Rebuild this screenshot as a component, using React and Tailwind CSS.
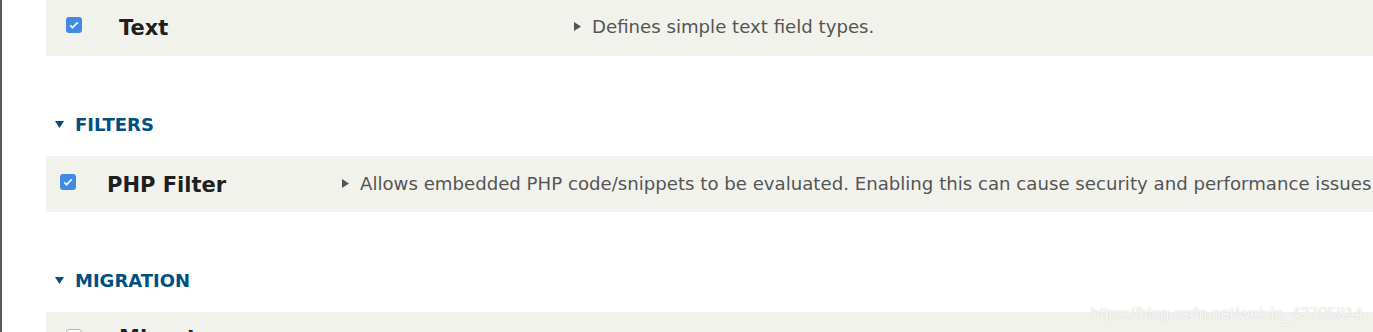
import React from "react";

const font = { fontFamily: '"DejaVu Sans", Verdana, sans-serif' };

function Check({ checked }) {
  if (!checked) {
    return <span className="block h-4 w-4 rounded-[3px] border border-[#b5b5b0] bg-white" />;
  }
  return (
    <span className="flex h-4 w-4 items-center justify-center rounded-[3px] bg-[#3f8ae6]">
      <svg viewBox="0 0 16 16" className="h-3 w-3">
        <path d="M3 8.5l3 3 7-7" fill="none" stroke="#e8f1ff" strokeWidth="2.6" />
      </svg>
    </span>
  );
}

function Row({ checked, name, desc, checkW, checkPad, nameW, extra = "" }) {
  return (
    <div className={"flex items-center overflow-hidden bg-[#f2f2ed] " + extra}>
      <div className={checkW + " " + checkPad + " flex shrink-0 mb-[5px]"}>
        <Check checked={checked} />
      </div>
      <div className={nameW + " shrink-0 pt-[4px] text-[21px] font-bold text-[#1f1f1f]"}>{name}</div>
      {desc && (
        <div className="flex shrink-0 items-center gap-[11px] whitespace-nowrap text-[18.15px] text-[#555]">
          <svg viewBox="0 0 7 9" className="h-[9px] w-[7px]">
            <path d="M0 0L7 4.5L0 9Z" fill="#555" />
          </svg>
          {desc}
        </div>
      )}
    </div>
  );
}

function Heading({ label }) {
  return (
    <div className="mt-[55px] mb-[18px] flex items-center gap-[11px] pl-[9px] text-[18px] font-bold uppercase text-[#004f80]">
      <svg viewBox="0 0 9 7" className="h-[7px] w-[9px]">
        <path d="M0 0H9L4.5 7Z" fill="#004f80" />
      </svg>
      {label}
    </div>
  );
}

export default function App() {
  return (
    <div className="relative h-[332px] overflow-hidden border-l-2 border-[#5a5a5a] bg-white pl-[44px]" style={font}>
      <Row
        checked
        name="Text"
        desc="Defines simple text field types."
        checkW="w-[73px]"
        checkPad="pl-[20px]"
        nameW="w-[455px]"
        extra="-mt-[2px] h-[58px]"
      />
      <Heading label="Filters" />
      <Row
        checked
        name="PHP Filter"
        desc="Allows embedded PHP code/snippets to be evaluated. Enabling this can cause security and performance issues"
        checkW="w-[61px]"
        checkPad="pl-[14px]"
        nameW="w-[235px]"
        extra="h-14"
      />
      <Heading label="Migration" />
      <div className="flex h-14 items-start bg-[#f2f2ed] pt-[17px]">
        <div className="flex w-[73px] shrink-0 pl-[20px]">
          <Check />
        </div>
        <div className="-mt-[6px] text-[21px] font-bold text-[#1f1f1f]">Migrate</div>
      </div>
      <div
        className="absolute bottom-[6px] right-[10px] text-[16px] text-[#fafafa] [text-shadow:0_0_1px_#bdbdbd]"
        style={{ fontFamily: '"Liberation Sans", Arial, sans-serif' }}
      >
        https://blog.csdn.net/weixin_43705814
      </div>
    </div>
  );
}
